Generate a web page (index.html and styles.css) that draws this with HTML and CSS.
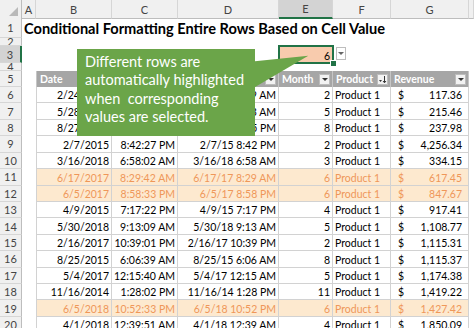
FILE: index.html
```html
<!DOCTYPE html>
<html lang="en">
<head>
<meta charset="utf-8">
<title>Conditional Formatting Entire Rows</title>
<link rel="stylesheet" href="styles.css">
</head>
<body>
<div class="sheet">
  <div class="row hdr">
    <div class="corner"><svg width="22" height="18" viewBox="0 0 22 18"><polygon points="9,16 18,16 18,7" fill="#b9b9b9"/></svg></div>
    <div class="ch">A</div>
    <div class="ch">B</div>
    <div class="ch">C</div>
    <div class="ch">D</div>
    <div class="ch on">E</div>
    <div class="ch">F</div>
    <div class="ch">G</div>
    <div class="ch"></div>
  </div>

  <div class="row r1">
    <div class="rh">1</div>
    <div class="title">Conditional Formatting Entire Rows Based on Cell Value</div>
  </div>

  <div class="row r2"><div class="rh">2</div></div>

  <div class="row r3">
    <div class="rh on">3</div>
    <div class="gap4"></div>
    <div class="e3">6</div>
    <div class="dvcell"><div class="dv"></div></div>
  </div>

  <div class="row r4"><div class="rh">4</div></div>

  <div class="row r5">
    <div class="rh">5</div>
    <div></div>
    <div class="th b"><span>Date</span><span class="fb"></span></div>
    <div class="th"><span>Time</span><span class="fb"></span></div>
    <div class="th"><span>Date Time</span><span class="fb"></span></div>
    <div class="th"><span>Month</span><span class="fb"></span></div>
    <div class="th"><span>Product</span><span class="fb sort"><svg width="9" height="9" viewBox="0 0 9 9"><polygon points="1,5 4,5 2.5,7" fill="#333"/><path d="M6.5 1 V7.5 M5 6 L6.5 7.8 L8 6" stroke="#333" stroke-width="1" fill="none"/></svg></span></div>
    <div class="th"><span>Revenue</span><span class="fb"></span></div>
    <div></div>
  </div>

  <div class="row d"><div class="rh">6</div><div></div><div class="c b">2/24/2016</div><div class="c">8:19:14 AM</div><div class="c">2/24/16 8:19 AM</div><div class="c">2</div><div class="c l">Product 1</div><div class="c g"><span>$</span><span>117.36</span></div><div></div></div>
  <div class="row d"><div class="rh">7</div><div></div><div class="c b">5/28/2017</div><div class="c">9:43:50 AM</div><div class="c">5/28/17 9:43 AM</div><div class="c">5</div><div class="c l">Product 1</div><div class="c g"><span>$</span><span>215.46</span></div><div></div></div>
  <div class="row d"><div class="rh">8</div><div></div><div class="c b">8/27/2015</div><div class="c">3:25:06 PM</div><div class="c">8/27/15 3:25 PM</div><div class="c">8</div><div class="c l">Product 1</div><div class="c g"><span>$</span><span>237.98</span></div><div></div></div>
  <div class="row d"><div class="rh">9</div><div></div><div class="c b">2/7/2015</div><div class="c">8:42:27 PM</div><div class="c">2/7/15 8:42 PM</div><div class="c">2</div><div class="c l">Product 1</div><div class="c g"><span>$</span><span>4,256.34</span></div><div></div></div>
  <div class="row d"><div class="rh">10</div><div></div><div class="c b">3/16/2018</div><div class="c">6:58:02 AM</div><div class="c">3/16/18 6:58 AM</div><div class="c">3</div><div class="c l">Product 1</div><div class="c g"><span>$</span><span>334.15</span></div><div></div></div>
  <div class="row d hl"><div class="rh">11</div><div></div><div class="c b">6/17/2017</div><div class="c">8:29:42 AM</div><div class="c">6/17/17 8:29 AM</div><div class="c">6</div><div class="c l">Product 1</div><div class="c g"><span>$</span><span>617.45</span></div><div></div></div>
  <div class="row d hl"><div class="rh">12</div><div></div><div class="c b">6/5/2017</div><div class="c">8:58:33 PM</div><div class="c">6/5/17 8:58 PM</div><div class="c">6</div><div class="c l">Product 1</div><div class="c g"><span>$</span><span>847.67</span></div><div></div></div>
  <div class="row d"><div class="rh">13</div><div></div><div class="c b">4/9/2015</div><div class="c">7:17:22 PM</div><div class="c">4/9/15 7:17 PM</div><div class="c">4</div><div class="c l">Product 1</div><div class="c g"><span>$</span><span>917.41</span></div><div></div></div>
  <div class="row d"><div class="rh">14</div><div></div><div class="c b">5/30/2018</div><div class="c">9:13:09 AM</div><div class="c">5/30/18 9:13 AM</div><div class="c">5</div><div class="c l">Product 1</div><div class="c g"><span>$</span><span>1,108.77</span></div><div></div></div>
  <div class="row d"><div class="rh">15</div><div></div><div class="c b">2/16/2017</div><div class="c">10:39:01 PM</div><div class="c">2/16/17 10:39 PM</div><div class="c">2</div><div class="c l">Product 1</div><div class="c g"><span>$</span><span>1,115.31</span></div><div></div></div>
  <div class="row d"><div class="rh">16</div><div></div><div class="c b">8/25/2015</div><div class="c">6:06:39 AM</div><div class="c">8/25/15 6:06 AM</div><div class="c">8</div><div class="c l">Product 1</div><div class="c g"><span>$</span><span>1,115.37</span></div><div></div></div>
  <div class="row d"><div class="rh">17</div><div></div><div class="c b">5/4/2017</div><div class="c">12:15:40 AM</div><div class="c">5/4/17 12:15 AM</div><div class="c">5</div><div class="c l">Product 1</div><div class="c g"><span>$</span><span>1,174.38</span></div><div></div></div>
  <div class="row d"><div class="rh">18</div><div></div><div class="c b">11/16/2014</div><div class="c">1:28:02 PM</div><div class="c">11/16/14 1:28 PM</div><div class="c">11</div><div class="c l">Product 1</div><div class="c g"><span>$</span><span>1,419.22</span></div><div></div></div>
  <div class="row d hl"><div class="rh">19</div><div></div><div class="c b">6/5/2018</div><div class="c">10:52:33 PM</div><div class="c">6/5/18 10:52 PM</div><div class="c">6</div><div class="c l">Product 1</div><div class="c g"><span>$</span><span>1,427.42</span></div><div></div></div>
  <div class="row d"><div class="rh">20</div><div></div><div class="c b">4/1/2018</div><div class="c">12:39:51 AM</div><div class="c">4/1/18 12:39 AM</div><div class="c">4</div><div class="c l">Product 1</div><div class="c g"><span>$</span><span>1,850.09</span></div><div></div></div>

  <svg class="wedge" width="60" height="45" viewBox="0 0 60 45"><polygon points="0,11.7 58.3,5.7 0,40" fill="#6ba549"/></svg>
  <div class="callout">Different rows are<br>automatically highlighted<br>when&nbsp; corresponding<br>values are selected.</div>
</div>
</body>
</html>
```
FILE: styles.css
```css
* { box-sizing: border-box; margin: 0; padding: 0; }
html, body { background: #fff; }
body {
  margin: 0;
  width: 474px;
  height: 328px;
  overflow: hidden;
  font-family: Lato, "Open Sans", sans-serif;
  color: #000;
}
.sheet { position: relative; width: 474px; }
.row {
  display: grid;
  grid-template-columns: 22px 14px 76px 66px 101px 54px 58px 78px 1fr;
}
.hdr { height: 18px; }
.r1 { height: 20px; }
.r2 { height: 8px; }
.r3 { height: 17px; }
.r4 { height: 8px; }
.r5 { height: 16px; }
.d { height: 16.43px; }

.corner {
  background: #f0f0f0;
  border-right: 1px solid #bdbdbd;
  border-bottom: 1px solid #bdbdbd;
}
.corner svg { display: block; }
.ch {
  background: #f0f0f0;
  border-right: 1px solid #d6d6d6;
  border-bottom: 1px solid #bdbdbd;
  color: #444;
  font-size: 11px;
  display: flex;
  align-items: center;
  justify-content: center;
}
.ch.on { background: #d3d3d3; border-bottom: 2px solid #217346; }

.rh {
  background: #f0f0f0;
  border-right: 1px solid #bdbdbd;
  border-bottom: 1px solid #d6d6d6;
  color: #444;
  font-size: 11px;
  display: flex;
  align-items: center;
  justify-content: center;
  overflow: hidden;
  line-height: 1;
}
.rh.on { background: #d3d3d3; border-right: 2px solid #217346; }

.title {
  grid-column: 2 / -1;
  align-self: end;
  padding-left: 2px;
  font-size: 14.6px;
  font-weight: 700;
  white-space: nowrap;
  line-height: 18px;
}

.gap4 { grid-column: 2 / 6; }
.e3 {
  position: relative;
  background: #f8cbad;
  font-size: 10.5px;
  display: flex;
  align-items: flex-end;
  justify-content: flex-end;
  padding: 0 3px 1px 0;
}
.e3::after {
  content: "";
  position: absolute;
  left: -1px; top: -1px; right: -1px; bottom: -1px;
  border: 2px solid #217346;
}
.e3::before {
  content: "";
  position: absolute;
  right: -4px; bottom: -4px;
  width: 5px; height: 5px;
  background: #217346;
  border: 1px solid #fff;
  z-index: 1;
}
.dvcell { padding: 1px 0 0 3px; }
.dv {
  width: 10px;
  height: 13px;
  background: #fff;
  border: 1px solid #bdbdbd;
  display: flex;
  align-items: center;
  justify-content: center;
}
.dv::after {
  content: "";
  border-left: 3px solid transparent;
  border-right: 3px solid transparent;
  border-top: 3px solid #666;
}

.th {
  background: #a6a6a6;
  color: #fff;
  font-weight: 700;
  font-size: 10.5px;
  border-right: 1px solid #c6c6c6;
  display: flex;
  align-items: center;
  justify-content: space-between;
  padding: 0 2px 0 3px;
  white-space: nowrap;
  overflow: hidden;
}
.th.b { border-left: 1px solid #c6c6c6; }
.fb {
  width: 11px;
  height: 11px;
  flex: none;
  background: #f2f2f2;
  border: 1px solid #bcbcbc;
  display: flex;
  align-items: center;
  justify-content: center;
}
.fb::after {
  content: "";
  border-left: 3px solid transparent;
  border-right: 3px solid transparent;
  border-top: 3px solid #333;
}
.fb.sort::after { display: none; }
.fb svg { display: block; }

.c {
  border-right: 1px solid #d2d2d2;
  border-bottom: 1px solid #d2d2d2;
  font-size: 10.5px;
  line-height: 12px;
  display: flex;
  align-items: flex-end;
  justify-content: flex-end;
  padding: 0 2px 1px 2px;
  white-space: nowrap;
  overflow: hidden;
}
.c.b { border-left: 1px solid #d2d2d2; }
.c.l { justify-content: flex-start; }
.c.g { justify-content: space-between; padding: 0 6px 1px 7px; }
.hl .c { background: #fde9cf; color: #ef9759; }

.callout {
  position: absolute;
  left: 77px;
  top: 49px;
  width: 178px;
  height: 87px;
  background: #6ba549;
  color: #fff;
  font-size: 14.5px;
  line-height: 18.3px;
  padding: 4px 0 0 8px;
  white-space: nowrap;
}
.wedge {
  position: absolute;
  left: 250px;
  top: 50px;
  display: block;
}
```
